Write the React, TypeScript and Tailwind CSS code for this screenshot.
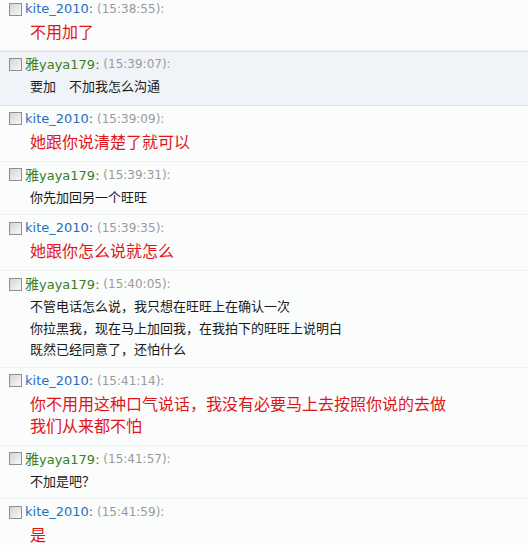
import React from 'react';

type Msg = {
  name: string;
  prefix?: string;
  time: string;
  lines: string[];
  red: boolean;
  active?: boolean;
};

const messages: Msg[] = [
  { name: 'kite_2010', time: '15:38:55', lines: ['不用加了'], red: true },
  { name: 'yaya179', prefix: '雅', time: '15:39:07', lines: ['要加　不加我怎么沟通'], red: false, active: true },
  { name: 'kite_2010', time: '15:39:09', lines: ['她跟你说清楚了就可以'], red: true },
  { name: 'yaya179', prefix: '雅', time: '15:39:31', lines: ['你先加回另一个旺旺'], red: false },
  { name: 'kite_2010', time: '15:39:35', lines: ['她跟你怎么说就怎么'], red: true },
  {
    name: 'yaya179',
    prefix: '雅',
    time: '15:40:05',
    lines: ['不管电话怎么说，我只想在旺旺上在确认一次', '你拉黑我，现在马上加回我，在我拍下的旺旺上说明白', '既然已经同意了，还怕什么'],
    red: false,
  },
  {
    name: 'kite_2010',
    time: '15:41:14',
    lines: ['你不用用这种口气说话，我没有必要马上去按照你说的去做', '我们从来都不怕'],
    red: true,
  },
  { name: 'yaya179', prefix: '雅', time: '15:41:57', lines: ['不加是吧？'], red: false },
  { name: 'kite_2010', time: '15:41:59', lines: ['是'], red: true },
];

const cjk = "font-['Noto_Sans_CJK_SC',sans-serif]";

function Checkbox() {
  return (
    <span className="inline-block w-[13px] h-[13px] border border-[#8f8f8f] bg-gradient-to-br from-[#d4d4d4] to-[#f8f8f8] shrink-0" />
  );
}

function Row({ m, first }: { m: Msg; first: boolean }) {
  let cls = 'border-b border-[#eff1f1] pt-[4px] pb-[7px]';
  if (m.active) cls = 'bg-[#f0f4f8] border-y border-[#dbe2e8] pt-[3px] pb-[8px]';
  else if (first) cls = 'border-b border-[#eff1f1] pt-[4px] pb-[8px]';
  else if (m.red) cls = 'border-b border-[#eff1f1] pt-[4px] pb-[9px]';

  return (
    <div className={cls}>
      <div className="flex items-center h-[18px] pl-[9px] font-['DejaVu_Sans',sans-serif] whitespace-pre">
        <Checkbox />
        <span
          className={
            m.red
              ? 'ml-[3px] text-[13px] text-[#1f6fbf]'
              : 'ml-[3px] text-[13px] text-[#3c7f1c]'
          }
        >
          {m.prefix && <span className={`${cjk} text-[14px]`}>{m.prefix}</span>}
          {m.name}:
        </span>
        <span className="text-[12px] text-[#9a9a9a]"> ({m.time}):</span>
      </div>
      <div className="mt-[2px] pl-[30px]">
        {m.lines.map((l, i) => (
          <div
            key={i}
            className={
              m.red
                ? `${cjk} text-[16px] leading-[22px] text-[#e0161b]`
                : `${cjk} text-[13px] leading-[21.5px] text-[#1a1a1a]`
            }
          >
            {l}
          </div>
        ))}
      </div>
    </div>
  );
}

export default function App() {
  return (
    <div className="w-[528px] h-[545px] overflow-hidden bg-[#fbfcfc]">
      <div className="-mt-[4px]">
        {messages.map((m, i) => (
          <Row key={i} m={m} first={i === 0} />
        ))}
      </div>
    </div>
  );
}
